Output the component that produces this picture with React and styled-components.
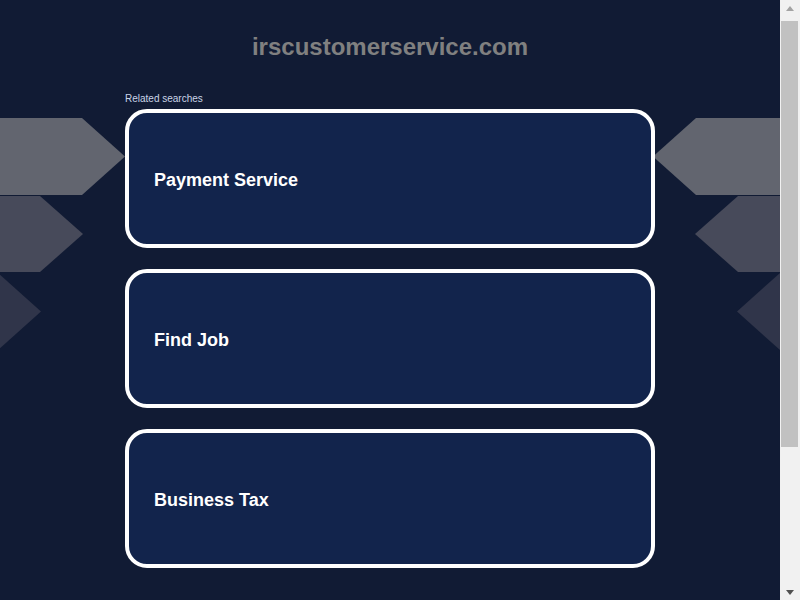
import React from 'react';
import styled, { createGlobalStyle } from 'styled-components';

const GlobalStyle = createGlobalStyle`
  html, body {
    margin: 0;
    padding: 0;
    background-color: #111b34;
    font-family: "Liberation Sans", Arial, sans-serif;
  }
`

const Shell = styled.div`
  display: flex;
  height: 100vh;
  overflow: hidden;
`

const Main = styled.div`
  position: relative;
  flex: 1;
  overflow: hidden;
`

const Page = styled.div`
  position: relative;
  min-height: 915px;
`

const Decor = styled.svg`
  position: absolute;
  top: 0;
  left: 0;
  width: 780px;
  height: 400px;
  pointer-events: none;
`

const Content = styled.div`
  position: relative;
  display: flex;
  flex-direction: column;
  align-items: center;
`

const Title = styled.h1`
  margin: 0;
  padding-top: 34px;
  line-height: 26px;
  color: #808080;
  font-size: 24px;
  font-weight: bold;
`

const Column = styled.div`
  width: 530px;
  margin-top: 33px;
  display: flex;
  flex-direction: column;
`

const Label = styled.div`
  color: #c9d4e6;
  font-size: 10px;
  line-height: 12px;
  margin-bottom: 4px;
`

const CardList = styled.div`
  display: flex;
  flex-direction: column;
  gap: 21px;
`

const Card = styled.a`
  display: flex;
  align-items: center;
  box-sizing: border-box;
  height: 139px;
  padding: 3px 0 0 25px;
  border: 4px solid #ffffff;
  border-radius: 22px;
  background-color: #12244c;
  color: #ffffff;
  font-size: 18px;
  font-weight: bold;
  text-decoration: none;
`

// scrollbar drawn as part of the frame
const ScrollBar = styled.div`
  width: 20px;
  display: flex;
  flex-direction: column;
  background-color: #f1f1f1;
`

const ScrollButton = styled.div`
  height: 17px;
  display: flex;
  align-items: center;
  justify-content: center;
  flex-shrink: 0;

  &::after {
    content: '';
    width: 0;
    height: 0;
    border-left: 4.5px solid transparent;
    border-right: 4.5px solid transparent;
    ${(p) => p.down
      ? `border-top: 5px solid #505050; margin-top: 2px;`
      : `border-bottom: 5px solid #a3a3a3; margin-top: -1px;`}
  }
`

const Track = styled.div`
  flex: 1;
  padding: 4px 2px 0 1px;
`

const Thumb = styled.div`
  height: 426px;
  background-color: #c1c1c1;
`

const shapes = [
  { color: '#62656f', top: 118, bottom: 195, base: 82 },
  { color: '#474a5a', top: 196, bottom: 272, base: 40 },
  { color: '#30354a', top: 273, bottom: 350, base: -2 },
];

const searches = ['Payment Service', 'Find Job', 'Business Tax'];

const Arrows = () => (
  <Decor viewBox="0 0 780 400">
    {shapes.map((s) => {
      const mid = (s.top + s.bottom) / 2;
      const tip = s.base + 43;
      const rBase = 780 - s.base - 2;
      const rTip = rBase - 43;
      return (
        <g key={s.color} fill={s.color}>
          <polygon points={`-60,${s.top} ${s.base},${s.top} ${tip},${mid} ${s.base},${s.bottom} -60,${s.bottom}`} />
          <polygon points={`840,${s.top} ${rBase},${s.top} ${rTip},${mid} ${rBase},${s.bottom} 840,${s.bottom}`} />
        </g>
      );
    })}
  </Decor>
);

const App = () => (
  <Shell>
    <GlobalStyle />
    <Main>
      <Page>
        <Arrows />
        <Content>
          <Title>irscustomerservice.com</Title>
          <Column>
            <Label>Related searches</Label>
            <CardList>
              {searches.map((s) => (
                <Card key={s} href="#">{s}</Card>
              ))}
            </CardList>
          </Column>
        </Content>
      </Page>
    </Main>
    <ScrollBar>
      <ScrollButton />
      <Track>
        <Thumb />
      </Track>
      <ScrollButton down />
    </ScrollBar>
  </Shell>
);

export default App;
